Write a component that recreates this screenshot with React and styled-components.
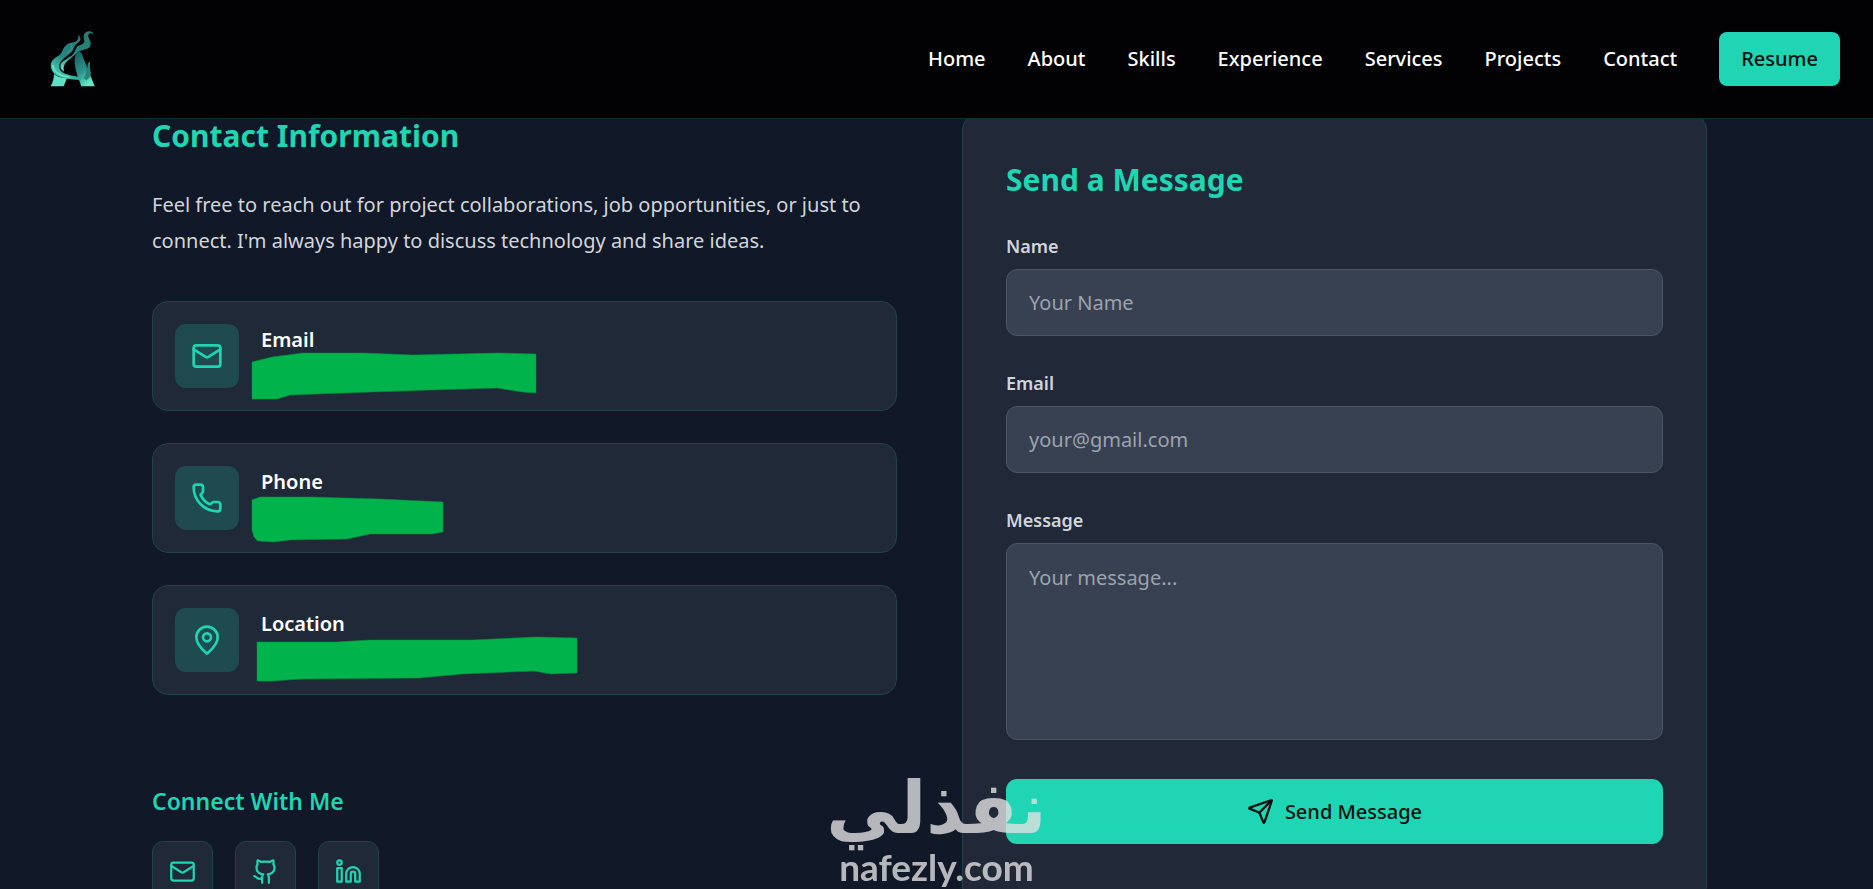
import React from 'react'
import styled, { createGlobalStyle } from 'styled-components'
import { Github, Linkedin, Mail, MapPin, Phone, Send } from 'lucide-react'

const links = ['Home', 'About', 'Skills', 'Experience', 'Services', 'Projects', 'Contact']

const contacts = [
  {
    title: 'Email',
    icon: Mail,
    marker: 'M-9 6L11 1L42 -3L102 -3L152 -1L236 -3L275 -2V37L261 36L236 32L169 34L82 37L29 39L16 43H-9Z',
  },
  {
    title: 'Phone',
    icon: Phone,
    marker: 'M-9 2L-1 -1H51L119 1L182 4V34L171 36H109L86 41L29 42L12 44L-3 43L-7 39L-9 32Z',
  },
  {
    title: 'Location',
    icon: MapPin,
    marker: 'M-4 2H75L108 0H211L275 -3L316 -2V33L290 34L273 31L201 34L158 38L41 39L11 41H-4Z',
  },
]

const socials = [
  { name: 'Email', icon: Mail },
  { name: 'GitHub', icon: Github },
  { name: 'LinkedIn', icon: Linkedin },
]

const App = () => (
  <Page>
    <GlobalStyle />
    <Header>
      <LogoLink href='#home' aria-label='Home'>
        <Logo />
      </LogoLink>
      <Nav>
        {links.map((link) => (
          <NavLink key={link} href={`#${link.toLowerCase()}`}>{link}</NavLink>
        ))}
        <ResumeLink href='#resume'>Resume</ResumeLink>
      </Nav>
    </Header>

    <Main>
      <section>
        <Title>Contact Information</Title>
        <Intro>
          Feel free to reach out for project collaborations, job opportunities,
          or just to connect. I'm always happy to discuss technology and share ideas.
        </Intro>

        <ContactList>
          {contacts.map(({ title, icon: Icon, marker }) => (
            <ContactCard key={title}>
              <IconTile>
                <Icon size={32} />
              </IconTile>
              <div>
                <ContactTitle>{title}</ContactTitle>
                <ContactValue>
                  <Marker aria-hidden='true'>
                    <path d={marker} />
                  </Marker>
                </ContactValue>
              </div>
            </ContactCard>
          ))}
        </ContactList>

        <Subtitle>Connect With Me</Subtitle>
        <Socials>
          {socials.map(({ name, icon: Icon }) => (
            <SocialLink key={name} href='#contact' aria-label={name}>
              <Icon size={27} />
            </SocialLink>
          ))}
        </Socials>
      </section>

      <Form onSubmit={(e) => e.preventDefault()}>
        <Title>Send a Message</Title>
        <Fields>
          <Field>
            <Label htmlFor='name'>Name</Label>
            <Input id='name' type='text' placeholder='Your Name' />
          </Field>
          <Field>
            <Label htmlFor='email'>Email</Label>
            <Input id='email' type='email' placeholder='your@gmail.com' />
          </Field>
          <Field>
            <Label htmlFor='message'>Message</Label>
            <TextArea id='message' placeholder='Your message...' />
          </Field>
        </Fields>
        <SubmitButton type='submit'>
          <Send size={27} />
          Send Message
        </SubmitButton>
      </Form>
    </Main>

    <Watermark>
      <WatermarkArabic lang='ar' dir='rtl'>نفذلي</WatermarkArabic>
      <WatermarkLatin>nafezly.com</WatermarkLatin>
    </Watermark>
  </Page>
)

const Logo = () => (
  <svg width='46' height='58' viewBox='90 58 138 174' aria-hidden='true'>
    <defs>
      <linearGradient id='smoke' x1='0.7' y1='0' x2='0.2' y2='1'>
        <stop offset='0' stopColor='#2f7a70' />
        <stop offset='0.5' stopColor='#1f877e' />
        <stop offset='1' stopColor='#55dcbe' />
      </linearGradient>
      <linearGradient id='leg' x1='0' y1='0' x2='0.5' y2='1'>
        <stop offset='0' stopColor='#14585c' />
        <stop offset='0.6' stopColor='#2a9288' />
        <stop offset='1' stopColor='#63e6c6' />
      </linearGradient>
    </defs>
    <path fill='url(#leg)' d='M178 122C186 126 189 139 194 152L224 227H184L172 194C166 176 163 158 164 142C165 133 170 126 178 122Z' />
    <path fill='#5fe0c4' d='M102 190C113 199 127 202 141 202L131 227H92C98 216 102 203 102 190Z' />
    <path fill='url(#smoke)' d='M174 72C184 80 184 91 174 96C167 100 164 106 160 116C156 126 142 134 132 143C119 155 113 168 122 180C132 192 157 194 180 199L184 209C151 205 121 204 104 190C90 177 89 158 99 147C108 137 119 137 126 123C133 107 139 99 153 96C167 95 179 88 174 72Z' />
    <path fill='url(#smoke)' d='M220 71C212 64 204 68 205 77C208 89 216 97 210 108C203 118 188 115 177 122C164 132 156 141 142 151C132 160 129 170 132 183C121 176 117 164 127 154C139 144 155 138 162 127C171 113 166 109 179 104C190 99 196 96 192 84C188 70 198 60 210 62C216 63 220 67 220 71Z' />
    <path fill='#25857b' d='M210 152C203 158 201 164 203 172L196 165C198 180 200 190 190 201L199 209C210 202 216 191 211 179C208 169 211 160 210 152Z' />
    <path fill='none' stroke='#2d8fa6' strokeWidth='4' d='M152 98C159 111 153 121 140 130' />
    <path fill='none' stroke='#78eed0' strokeWidth='4' d='M98 163C100 182 120 195 148 199' />
  </svg>
)

const accent = '#1fd5b3'

const GlobalStyle = createGlobalStyle`
  * {
    box-sizing: border-box;
  }

  body {
    background: #111827;
    color: #fff;
    font-family: 'Segoe UI', 'Noto Sans', sans-serif;
    font-size: 20px;
    margin: 0;
  }
`

const Page = styled.div`
  height: 100vh;
  overflow: hidden;
  position: relative;
`

const Header = styled.header`
  align-items: center;
  background: #020205;
  border-bottom: 1px solid #0d3030;
  display: flex;
  height: 119px;
  justify-content: space-between;
  left: 0;
  padding: 0 33px 0 50px;
  position: fixed;
  right: 0;
  top: 0;
  z-index: 2;
`

const LogoLink = styled.a`
  display: flex;
`

const Nav = styled.nav`
  align-items: center;
  display: flex;
  gap: 42px;
`

const NavLink = styled.a`
  color: #fff;
  font-weight: 500;
  line-height: 32px;
  text-decoration: none;
`

const ResumeLink = styled(NavLink)`
  background: ${accent};
  border-radius: 8px;
  color: #03110f;
  padding: 11px 22px;
`

const Main = styled.main`
  display: grid;
  gap: 65px;
  grid-template-columns: 1fr 1fr;
  padding: 114px 166px 0 152px;
`

const Title = styled.h2`
  color: ${accent};
  font-size: 30px;
  font-weight: 700;
  line-height: 43px;
  margin: 0 0 30px;
`

const Intro = styled.p`
  color: #d1d5db;
  line-height: 36px;
  margin: 0 0 42px;
`

const ContactList = styled.div`
  display: grid;
  gap: 32px;
`

const ContactCard = styled.div`
  align-items: center;
  background: #1f2937;
  border: 1px solid #204449;
  border-radius: 16px;
  display: flex;
  gap: 22px;
  padding: 22px;
`

const IconTile = styled.div`
  align-items: center;
  background: #1f4b50;
  border-radius: 11px;
  color: ${accent};
  display: flex;
  height: 64px;
  justify-content: center;
  width: 64px;
`

const ContactTitle = styled.h3`
  font-size: 20px;
  font-weight: 600;
  line-height: 32px;
  margin: 0;
`

const ContactValue = styled.div`
  height: 32px;
  position: relative;
`

const Marker = styled.svg`
  fill: #00b34b;
  height: 32px;
  left: 0;
  overflow: visible;
  position: absolute;
  stroke: rgba(0, 150, 65, 0.5);
  top: 0;
  width: 320px;
`

const Subtitle = styled.h3`
  color: ${accent};
  font-size: 23px;
  font-weight: 600;
  line-height: 36px;
  margin: 88px 0 22px;
`

const Socials = styled.div`
  display: flex;
  gap: 22px;
`

const SocialLink = styled.a`
  background: #1f2937;
  border: 1px solid #204449;
  border-radius: 11px;
  color: ${accent};
  display: flex;
  padding: 16px;
`

const Form = styled.form`
  background: #212838;
  border: 1px solid #204449;
  border-radius: 16px;
  padding: 43px;
`

const Fields = styled.div`
  display: grid;
  gap: 32px;
`

const Field = styled.div`
  display: grid;
  gap: 8px;
`

const Label = styled.label`
  color: #d1d5db;
  font-size: 18px;
  font-weight: 600;
  line-height: 30px;
`

const Input = styled.input`
  background: #374151;
  border: 1px solid #4b5563;
  border-radius: 11px;
  color: #fff;
  font: inherit;
  height: 67px;
  padding: 16px 22px;
  width: 100%;

  &::placeholder {
    color: #9ca3af;
  }
`

const TextArea = styled(Input).attrs({ as: 'textarea' })`
  height: 197px;
  line-height: 35px;
  resize: none;
`

const SubmitButton = styled.button`
  align-items: center;
  background: ${accent};
  border: 0;
  border-radius: 11px;
  color: #03110f;
  display: flex;
  font: inherit;
  font-weight: 500;
  gap: 11px;
  height: 65px;
  justify-content: center;
  margin-top: 39px;
  width: 100%;
`

const Watermark = styled.div`
  align-items: center;
  bottom: 0;
  color: #e0e0e2;
  display: flex;
  flex-direction: column;
  left: 0;
  opacity: 0.8;
  pointer-events: none;
  position: fixed;
  right: 0;
  z-index: 3;
`

const WatermarkArabic = styled.span`
  font-family: 'DejaVu Sans', sans-serif;
  font-size: 72px;
  font-weight: 700;
  line-height: 72px;
`

const WatermarkLatin = styled.span`
  font-family: Lato, sans-serif;
  font-size: 37px;
  font-weight: 700;
  line-height: 45px;
`

export default App
